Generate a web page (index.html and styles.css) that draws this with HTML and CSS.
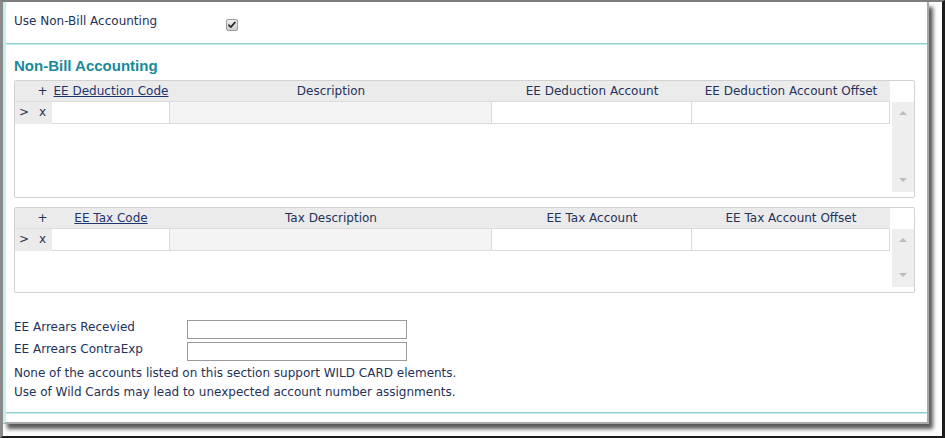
FILE: index.html
```html
<!DOCTYPE html>
<html>
<head>
<meta charset="utf-8">
<title>Non-Bill Accounting</title>
<link rel="stylesheet" href="styles.css">
</head>
<body>
<div class="frame">
  <div class="panel">
    <div class="toprow">
      <span class="toplbl">Use Non-Bill Accounting</span>
      <span class="chk"><svg viewBox="0 0 12 12" width="10" height="10"><path d="M2.2 6.2 L4.6 8.6 L9.6 2.8" fill="none" stroke="#2a2a2a" stroke-width="2" stroke-linecap="round" stroke-linejoin="round"/></svg></span>
    </div>
    <div class="section">
      <h2 class="heading">Non-Bill Accounting</h2>

      <div class="grid g1">
        <div class="tbl">
          <div class="hrow">
            <div class="hc"></div>
            <div class="hc">+</div>
            <div class="hc"><span class="lnk">EE Deduction Code</span></div>
            <div class="hc">Description</div>
            <div class="hc">EE Deduction Account</div>
            <div class="hc">EE Deduction Account Offset</div>
          </div>
          <div class="drow">
            <div class="act">&gt;</div>
            <div class="act">x</div>
            <div class="dc"></div>
            <div class="dc ro"></div>
            <div class="dc"></div>
            <div class="dc"></div>
          </div>
        </div>
        <div class="vs">
          <div class="track"><span class="up"></span><span class="dn"></span></div>
        </div>
      </div>

      <div class="grid g2">
        <div class="tbl">
          <div class="hrow">
            <div class="hc"></div>
            <div class="hc">+</div>
            <div class="hc"><span class="lnk">EE Tax Code</span></div>
            <div class="hc">Tax Description</div>
            <div class="hc">EE Tax Account</div>
            <div class="hc">EE Tax Account Offset</div>
          </div>
          <div class="drow">
            <div class="act">&gt;</div>
            <div class="act">x</div>
            <div class="dc"></div>
            <div class="dc ro"></div>
            <div class="dc"></div>
            <div class="dc"></div>
          </div>
        </div>
        <div class="vs">
          <div class="track"><span class="up"></span><span class="dn"></span></div>
        </div>
      </div>

      <div class="fields">
        <div class="frow">
          <span class="flbl">EE Arrears Recevied</span>
          <span class="inp"></span>
        </div>
        <div class="frow">
          <span class="flbl">EE Arrears ContraExp</span>
          <span class="inp"></span>
        </div>
        <div class="notes">
          <div>None of the accounts listed on this section support WILD CARD elements.</div>
          <div>Use of Wild Cards may lead to unexpected account number assignments.</div>
        </div>
      </div>
    </div>
    <div class="botline"></div>
  </div>
</div>
</body>
</html>
```

FILE: styles.css
```css
html, body {
  margin: 0;
  padding: 0;
  background: #ffffff;
}

body {
  font-family: "DejaVu Sans", Verdana, sans-serif;
  font-size: 12px;
  color: #243257;
}

.frame {
  width: 945px;
  height: 438px;
  box-sizing: border-box;
  border-top: 2px solid #7c7c7c;
  border-left: 3px solid #8a8a8a;
  border-right: 3px solid #1c1c1c;
  border-bottom: 2px solid #1c1c1c;
  background: #ffffff;
  overflow: hidden;
}

.panel {
  width: 926px;
  box-sizing: border-box;
  border-left: 3px solid #c3efef;
  border-right: 2px solid #a9a9a9;
  border-bottom: 2px solid #a9a9a9;
  padding-bottom: 8px;
  background: #ffffff;
  box-shadow: 4px 5px 4px rgba(0, 0, 0, 0.65);
}

.toprow {
  height: 42px;
  box-sizing: border-box;
  display: flex;
  align-items: flex-start;
  padding: 12px 0 0 8px;
  border-bottom: 1px solid #92caca;
  box-shadow: 0 1px 0 #c6eeee;
}

.toplbl {
  width: 212px;
  line-height: 15px;
}

.chk {
  margin-top: 5px;
  width: 12px;
  height: 12px;
  box-sizing: border-box;
  border: 1px solid #9c9c9c;
  border-radius: 2px;
  background: linear-gradient(#f0f0f0, #cfcfcf);
  display: flex;
  align-items: center;
  justify-content: center;
}

.chk svg {
  display: block;
}

.section {
  padding: 13px 12px 10px 8px;
}

.heading {
  margin: 0 0 5px 0;
  font-family: "Liberation Sans", Arial, sans-serif;
  font-weight: 700;
  font-size: 15px;
  line-height: 18px;
  color: #178a9a;
}

.grid {
  display: flex;
  box-sizing: border-box;
  border: 1px solid #d2d2d2;
  border-radius: 2px;
  background: #ffffff;
}

.g1 {
  height: 118px;
}

.g2 {
  height: 86px;
  margin-top: 9px;
}

.tbl {
  width: 875px;
}

.hrow,
.drow {
  display: grid;
  grid-template-columns: 18px 19px 118px 322px 200px 198px;
}

.hrow {
  height: 21px;
  box-sizing: border-box;
  background: #ebebeb;
  border-bottom: 1px solid #dcdcdc;
}

.hc {
  line-height: 20px;
  text-align: center;
  white-space: nowrap;
  color: #24325a;
}

.lnk {
  text-decoration: underline;
  color: #1f3570;
}

.drow {
  height: 22px;
}

.act {
  background: #ebebeb;
  line-height: 21px;
  text-align: center;
  color: #2a3350;
}

.dc {
  box-sizing: border-box;
  height: 22px;
  background: #ffffff;
  border-right: 1px solid #dadada;
  border-bottom: 1px solid #dadada;
}

.dc.ro {
  background: #f4f4f4;
}

.vs {
  width: 24px;
  box-sizing: border-box;
  padding: 21px 0 5px 2px;
  display: flex;
}

.track {
  flex: 1;
  background: #eeeeee;
  display: flex;
  flex-direction: column;
  justify-content: space-between;
  align-items: center;
  padding: 9px 0 10px 0;
}

.up,
.dn {
  width: 0;
  height: 0;
  border-left: 4px solid transparent;
  border-right: 4px solid transparent;
}

.up {
  border-bottom: 4px solid #bcbcbc;
}

.dn {
  border-top: 4px solid #bcbcbc;
}

.fields {
  margin-top: 27px;
}

.frow {
  display: flex;
  align-items: flex-start;
  height: 19px;
  margin-bottom: 3px;
}

.flbl {
  width: 173px;
  line-height: 15px;
}

.inp {
  width: 220px;
  height: 19px;
  box-sizing: border-box;
  border: 1px solid #9a9a9a;
  background: #ffffff;
}

.notes {
  margin-top: 0;
  line-height: 19px;
}

.botline {
  border-top: 1px solid #92caca;
  border-bottom: 1px solid #c6eeee;
}
```
